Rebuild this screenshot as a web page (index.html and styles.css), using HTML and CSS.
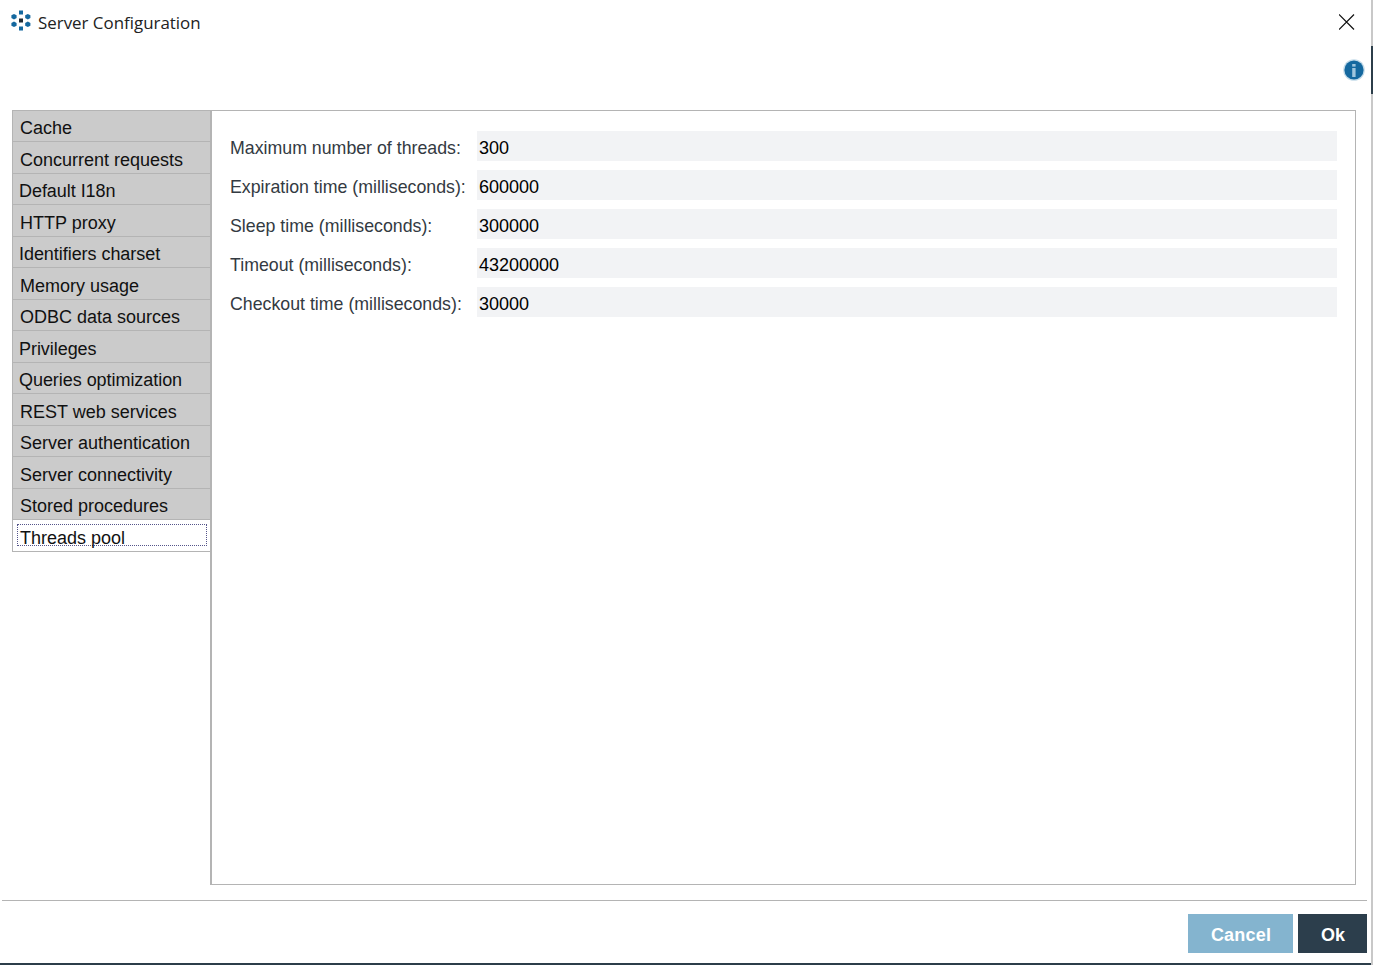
FILE: index.html
```html
<!DOCTYPE html>
<html lang="en">
<head>
    <meta charset="UTF-8">
    <title>Server Configuration</title>
    <link rel="stylesheet" href="styles.css">
</head>
<body>
    <div class="dialog">
        <div class="title-bar">
            <svg class="logo" width="20" height="21" viewBox="0 0 20 21">
                <rect x="8" y="0.5" width="4" height="4" fill="#14689f"/>
                <rect x="8" y="16.5" width="4" height="4" fill="#14689f"/>
                <path d="M3 3.9L5.6 5.3V8.1L3 9.5L0.4 8.1V5.3Z" fill="#14689f"/>
                <path d="M16.8 3.9L19.4 5.3V8.1L16.8 9.5L14.2 8.1V5.3Z" fill="#14689f"/>
                <path d="M3 11.5L5.6 12.9V15.7L3 17.1L0.4 15.7V12.9Z" fill="#14689f"/>
                <path d="M16.8 11.5L19.4 12.9V15.7L16.8 17.1L14.2 15.7V12.9Z" fill="#14689f"/>
                <rect x="8" y="8.5" width="4" height="4" fill="#1e2a33"/>
            </svg>
            <span class="title">Server Configuration</span>
            <svg class="close" width="16" height="16" viewBox="0 0 16 16">
                <path d="M0 0.5L15 15.5M15 0.5L0 15.5" stroke="#111" stroke-width="1.2" fill="none"/>
            </svg>
        </div>
        <div class="info-row">
            <svg width="22" height="22" viewBox="0 0 22 22">
                <circle cx="11" cy="11" r="10.8" fill="#c4dbe9"/>
                <circle cx="11" cy="11" r="9.6" fill="#14689f"/>
                <rect x="9.2" y="9" width="3.4" height="9" fill="#9fc5dd"/>
                <rect x="9.2" y="5" width="3.4" height="2.6" fill="#9fc5dd"/>
            </svg>
        </div>
        <div class="main">
            <div class="tabs">
                <div class="tab">Cache</div>
                <div class="tab">Concurrent requests</div>
                <div class="tab tight">Default I18n</div>
                <div class="tab">HTTP proxy</div>
                <div class="tab tight">Identifiers charset</div>
                <div class="tab">Memory usage</div>
                <div class="tab">ODBC data sources</div>
                <div class="tab tight">Privileges</div>
                <div class="tab tight">Queries optimization</div>
                <div class="tab">REST web services</div>
                <div class="tab">Server authentication</div>
                <div class="tab">Server connectivity</div>
                <div class="tab">Stored procedures</div>
                <div class="tab active"><span class="focus">Threads pool</span></div>
            </div>
            <div class="panel">
                <div class="form-row"><label>Maximum number of threads:</label><div class="value">300</div></div>
                <div class="form-row"><label>Expiration time (milliseconds):</label><div class="value">600000</div></div>
                <div class="form-row"><label>Sleep time (milliseconds):</label><div class="value">300000</div></div>
                <div class="form-row"><label>Timeout (milliseconds):</label><div class="value">43200000</div></div>
                <div class="form-row"><label>Checkout time (milliseconds):</label><div class="value">30000</div></div>
            </div>
        </div>
        <div class="footer">
            <button class="btn cancel">Cancel</button>
            <button class="btn ok">Ok</button>
        </div>
    </div>
    <div class="edge-mark"></div>
</body>
</html>
```

FILE: styles.css
```css
html, body {
    margin: 0;
    padding: 0;
    height: 965px;
    overflow: hidden;
    background-color: white;
}
body {
    font-family: "Liberation Sans", Arial, sans-serif;
    color: #111;
    position: relative;
}
.dialog {
    box-sizing: border-box;
    width: 1371px;
    height: 965px;
    border-bottom: 2px solid #2c3e4a;
    display: flex;
    flex-direction: column;
}
.title-bar {
    display: flex;
    align-items: center;
    height: 44px;
    padding: 0 16px 0 11px;
    box-sizing: border-box;
}
.logo {
    margin-right: 7px;
    margin-top: -4px;
}
.title {
    font-family: "Open Sans", "Noto Sans", sans-serif;
    font-size: 16.9px;
    color: #222;
}
.close {
    margin-left: auto;
}
.info-row {
    display: flex;
    justify-content: flex-end;
    height: 66px;
    padding-right: 6px;
    padding-top: 15px;
    box-sizing: border-box;
}
.main {
    display: flex;
    height: 775px;
    margin-left: 12px;
    margin-right: 15px;
}
.tabs {
    width: 198px;
    height: 442px;
    box-sizing: border-box;
    border: 1px solid #b4b4b4;
    border-right: none;
}
.tab {
    height: 31.5px;
    display: flex;
    align-items: center;
    padding: 6px 7px 0;
    font-size: 18px;
    background-color: #cbcbcb;
    border-bottom: 1px solid #b4b4b4;
    box-sizing: border-box;
}
.tab:first-child {
    height: 31px;
    padding-top: 4px;
}
.tab.tight {
    padding-left: 6px;
    letter-spacing: -0.05px;
}
.tab.active {
    height: 31px;
    background-color: white;
    border-bottom: none;
    padding: 4px 3px 0 4px;
    align-items: flex-start;
}
.focus {
    flex: 1;
    height: 20px;
    border: 1px dotted #55558a;
    padding-left: 2px;
    line-height: 26px;
}
.panel {
    flex: 1;
    box-sizing: border-box;
    border: 1px solid #b4b4b4;
    border-left-width: 2px;
    padding: 20px 18px 0 18px;
    display: flex;
    flex-direction: column;
    gap: 9px;
}
.form-row {
    display: flex;
    align-items: center;
    height: 30px;
}
.form-row label {
    width: 247px;
    font-size: 17.75px;
    color: #333a42;
    white-space: nowrap;
    padding-top: 5px;
}
.value {
    flex: 1;
    height: 30px;
    line-height: 35px;
    padding-left: 2px;
    font-size: 18px;
    color: #000;
    background-color: #f2f3f5;
}
.footer {
    margin: 15px 4px 0 2px;
    border-top: 1px solid #b4b4b4;
    padding-top: 13px;
    display: flex;
    justify-content: flex-end;
    gap: 5px;
}
.btn {
    height: 39px;
    border: none;
    color: white;
    font-family: "Liberation Sans", Arial, sans-serif;
    font-size: 18px;
    font-weight: bold;
    padding: 4px 0 0 1px;
}
.cancel {
    width: 105px;
    letter-spacing: 0.2px;
    background-color: #84b4cf;
}
.ok {
    width: 69px;
    background-color: #2c3e4c;
}
.edge-mark {
    position: absolute;
    top: 0;
    right: 0;
    width: 2px;
    height: 965px;
    background: linear-gradient(#c8c8c8 46px, #2c3e4a 46px, #2c3e4a 94px, #c8c8c8 94px);
}
```
